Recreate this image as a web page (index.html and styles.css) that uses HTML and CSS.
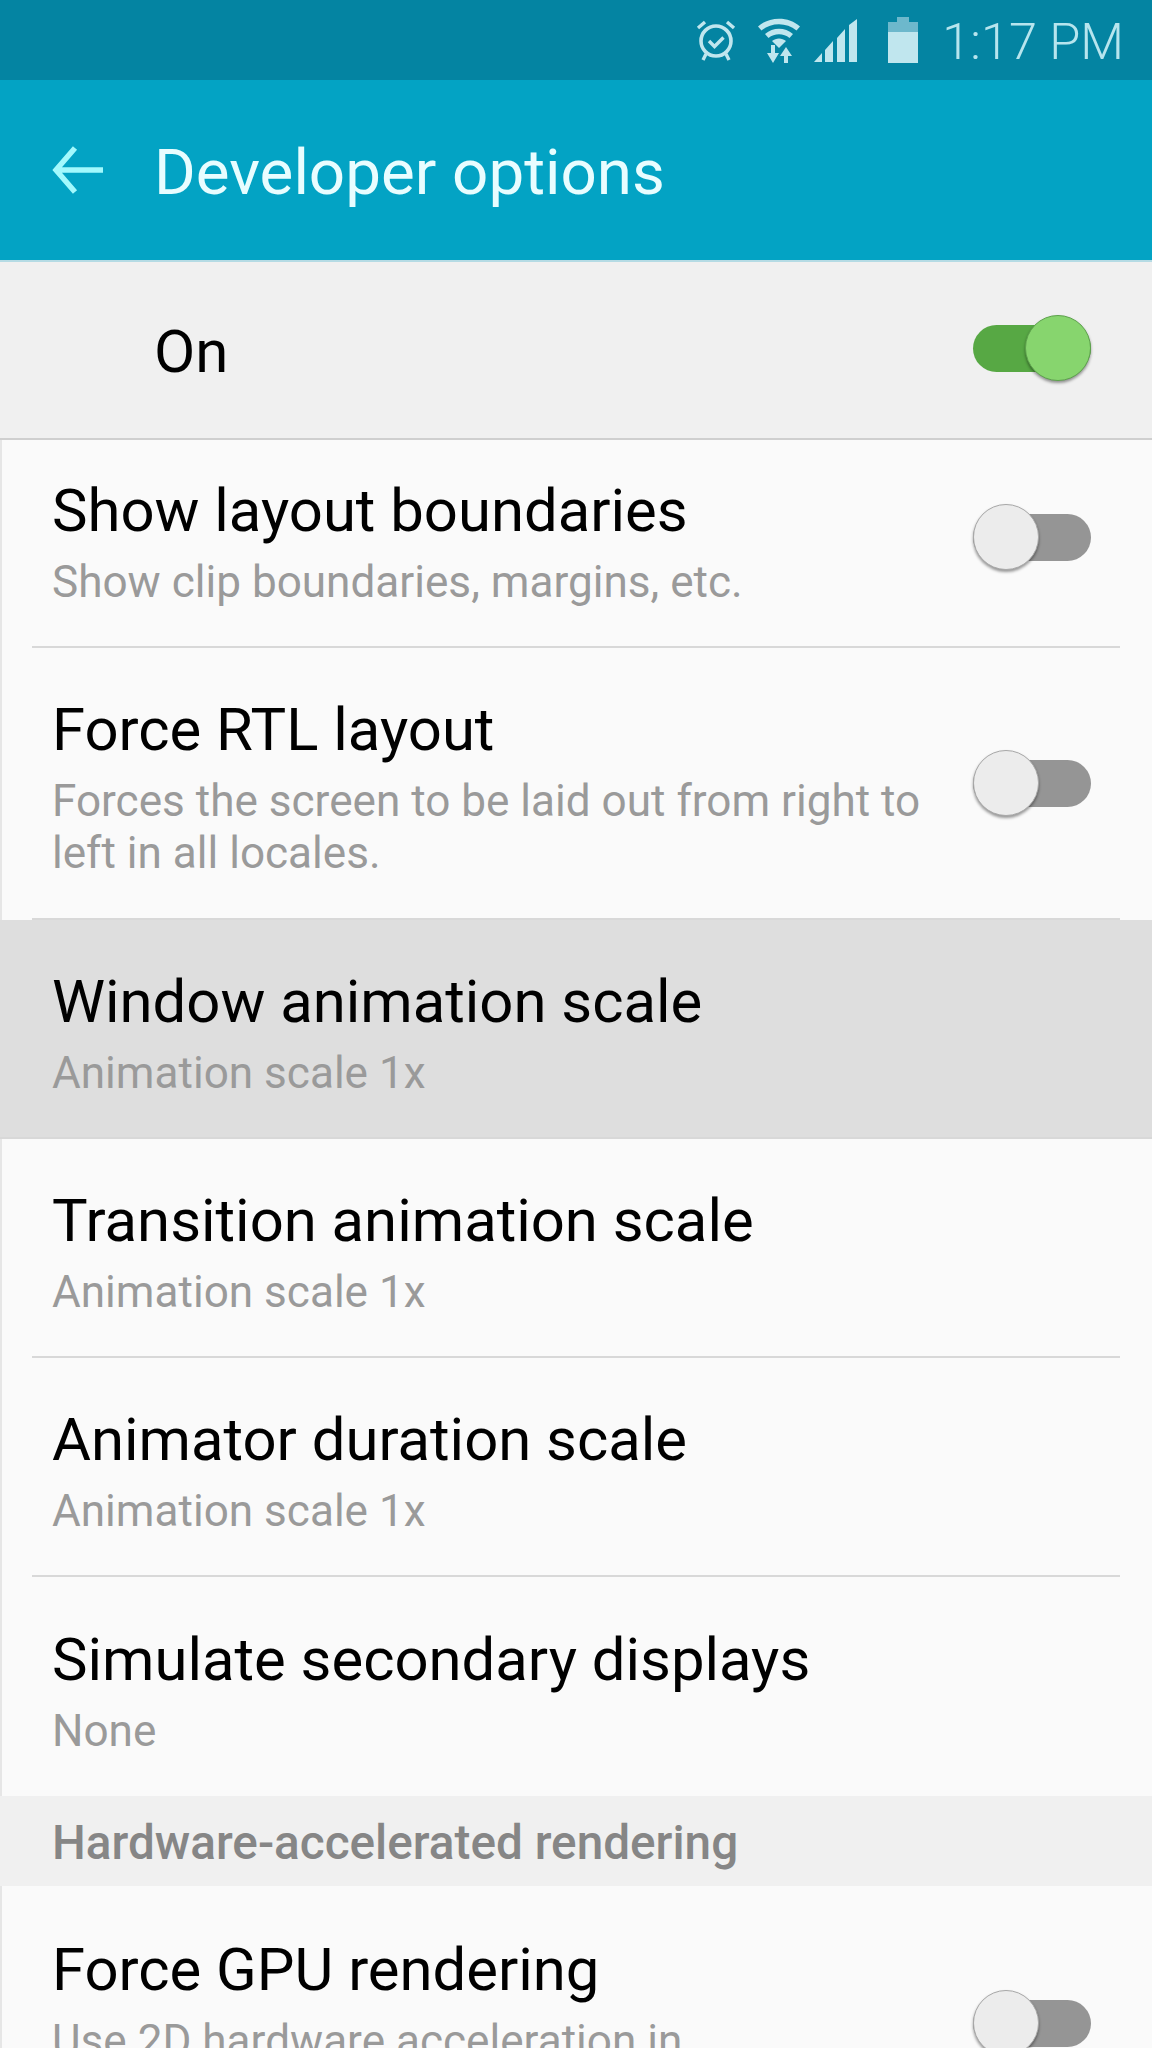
FILE: index.html
```html
<!DOCTYPE html>
<html lang="en">
<head>
    <meta charset="UTF-8">
    <meta name="viewport" content="width=device-width, initial-scale=1.0">
    <title>Developer options</title>
    <link rel="stylesheet" href="styles.css">
</head>
<body>

<div class="screen">
    <!-- Status bar -->
    <div class="status-bar">
        <svg class="icon-alarm" width="40" height="44" viewBox="0 0 40 44">
            <circle cx="20" cy="23" r="15" fill="none" stroke="#c0e6ee" stroke-width="3.6"/>
            <path d="M13 23l5.500 5.500 9-9" fill="none" stroke="#c0e6ee" stroke-width="3.400"/>
            <path d="M2 10l7-6M38 10l-7-6M10 36l-3 6M30 36l3 6" fill="none" stroke="#c0e6ee" stroke-width="3.400"/>
        </svg>
        <svg class="icon-wifi" width="44" height="46" viewBox="0 0 44 46">
            <path d="M1 9.500C12-1 32-1 43 9.500l-3.500 4C29.500 5 14.500 5 4.500 13.500z" fill="#c0e6ee"/>
            <path d="M8 17c8-7 20-7 28 0l-3.500 4c-6-5-15-5-21 0z" fill="#c0e6ee"/>
            <path d="M15 24c4-3.500 10-3.500 14 0l-7 7z" fill="#c0e6ee"/>
            <path d="M14 28h4v8h4l-6 10-6-10h4zM29 30l6 9h-4v7h-4v-7h-4z" fill="#c0e6ee"/>
        </svg>
        <svg class="icon-signal" width="43" height="43" viewBox="0 0 43 43">
            <path d="M0 43L8 34V43zM11 31l8-9v21h-8zM23 19l8-9v33h-8zM35 6l8-6v43h-8z" fill="#c0e6ee"/>
        </svg>
        <svg class="icon-battery" width="30" height="46" viewBox="0 0 30 46">
            <path d="M9 0h12v5h9v12H0V5h9z" fill="#6db8cc"/>
            <rect y="15" width="30" height="31" fill="#c0e6ee"/>
        </svg>
        <span class="clock">1:17 PM</span>
    </div>

    <!-- App bar -->
    <div class="app-bar">
        <svg class="back-arrow" width="54" height="54" viewBox="0 0 54 54">
            <path d="M52 27H5M24 5L5 27l19 22" fill="none" stroke="#a2f9fd" stroke-width="5.500"/>
        </svg>
        <h1>Developer options</h1>
    </div>

    <!-- Master switch -->
    <div class="master-row">
        <span class="master-label">On</span>
        <div class="switch switch-on"><div class="knob"></div></div>
    </div>

    <div class="list">
        <div class="row">
            <div class="row-text">
                <div class="row-title">Show layout boundaries</div>
                <div class="row-sub">Show clip boundaries, margins, etc.</div>
            </div>
            <div class="switch switch-first"><div class="knob"></div></div>
        </div>

        <div class="row row-tall">
            <div class="row-text">
                <div class="row-title">Force RTL layout</div>
                <div class="row-sub">Forces the screen to be laid out from right to<br>left in all locales.</div>
            </div>
            <div class="switch"><div class="knob"></div></div>
        </div>

        <div class="row row-pressed">
            <div class="row-text">
                <div class="row-title">Window animation scale</div>
                <div class="row-sub">Animation scale 1x</div>
            </div>
        </div>

        <div class="row">
            <div class="row-text">
                <div class="row-title">Transition animation scale</div>
                <div class="row-sub">Animation scale 1x</div>
            </div>
        </div>

        <div class="row">
            <div class="row-text">
                <div class="row-title">Animator duration scale</div>
                <div class="row-sub">Animation scale 1x</div>
            </div>
        </div>

        <div class="row row-last">
            <div class="row-text">
                <div class="row-title">Simulate secondary displays</div>
                <div class="row-sub">None</div>
            </div>
        </div>

        <div class="section-header">Hardware-accelerated rendering</div>

        <div class="row row-last row-cut">
            <div class="row-text">
                <div class="row-title">Force GPU rendering</div>
                <div class="row-sub">Use 2D hardware acceleration in</div>
            </div>
            <div class="switch switch-cut"><div class="knob"></div></div>
        </div>
    </div>
</div>

</body>
</html>
```

FILE: styles.css
```css
html, body {
    margin: 0;
    padding: 0;
}

body {
    font-family: Roboto, "Liberation Sans", sans-serif;
    background-color: #fafafa;
    color: #000;
}

.screen {
    width: 1152px;
    height: 2048px;
    overflow: hidden;
}

/* Status bar */
.status-bar {
    height: 80px;
    box-sizing: border-box;
    padding-right: 28px;
    background-color: #0484a2;
    display: flex;
    align-items: center;
    justify-content: flex-end;
}

.icon-alarm { margin-right: 21px; }
.icon-wifi { margin-right: 13px; }
.icon-signal { margin-right: 31px; }
.icon-battery { margin-right: 24px; }

.clock {
    margin-top: 2px;
    font-size: 50.5px;
    font-weight: 300;
    color: #b7e5ee;
}

/* App bar */
.app-bar {
    height: 180px;
    box-sizing: border-box;
    background-color: #03a3c4;
    display: flex;
    align-items: center;
    padding-left: 51px;
}

.back-arrow {
    margin-right: 49px;
}

h1 {
    margin: 5px 0 0;
    font-size: 63.7px;
    font-weight: 400;
    color: #e8fdff;
}

/* Master switch */
.master-row {
    height: 180px;
    box-sizing: border-box;
    background-color: #f0f0f0;
    border-top: 2px solid #b5dbe4;
    border-bottom: 2px solid #cfcfcf;
    display: flex;
    align-items: center;
    justify-content: space-between;
    padding-left: 154px;
    padding-right: 61px;
}

.master-label {
    margin-top: 3px;
    font-size: 60px;
}

/* Rows */
.list {
    border-left: 2px solid #e6e6e6;
}

.row {
    height: 208px;
    box-sizing: border-box;
    margin-left: 30px;
    margin-right: 32px;
    padding-left: 20px;
    padding-right: 29px;
    border-bottom: 2px solid #d8d8d8;
    display: flex;
    align-items: center;
    justify-content: space-between;
}

.row-tall {
    height: 272px;
}

.row + .row:not(.row-tall) {
    height: 219px;
}

.row + .row .row-text {
    margin-top: 10px;
}

.row-pressed {
    margin-left: -2px;
    margin-right: 0;
    padding-left: 52px;
    background-color: #dedede;
}

.row-last {
    border-bottom: none;
}

.row-title {
    font-size: 59.8px;
    line-height: 66px;
}

.row-sub {
    font-size: 44.1px;
    line-height: 52px;
    margin-top: 12px;
    color: #9a9a9a;
}

.section-header {
    height: 90px;
    box-sizing: border-box;
    margin-left: -2px;
    padding-left: 52px;
    padding-top: 5px;
    background-color: #f0f0f0;
    color: #868686;
    font-size: 47.7px;
    font-weight: 500;
    line-height: 85px;
}

.row-cut {
    align-items: flex-start;
    padding-top: 51px;
}

/* Switches */
.switch {
    position: relative;
    flex: none;
    width: 118px;
    height: 47px;
    border-radius: 24px;
    background-color: #959595;
}

.knob {
    position: absolute;
    top: -10px;
    left: 0;
    width: 66px;
    height: 66px;
    box-sizing: border-box;
    border-radius: 50%;
    border: 1px solid #a8a8a8;
    background-color: #ececec;
    box-shadow: 0 2px 3px rgba(0, 0, 0, 0.4);
}

.switch-on {
    margin-top: -3px;
    background-color: #57a844;
}

.switch-on .knob {
    left: 52px;
    border-color: #5da24c;
    background-color: #87d56e;
}

.switch-first {
    margin-top: -12px;
}

.switch-cut {
    margin-top: 63px;
}
```
